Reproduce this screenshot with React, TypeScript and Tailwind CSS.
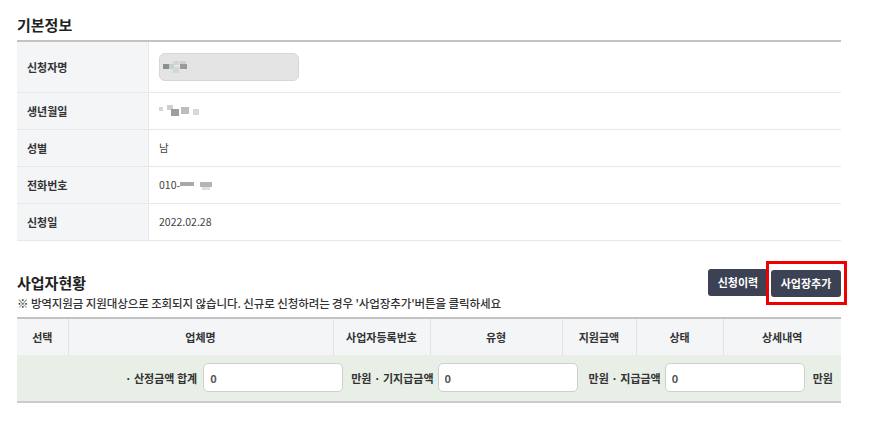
import React from 'react'

const font = { fontFamily: '"Noto Sans CJK KR", "Noto Sans", sans-serif' }

function Blur({ blocks }: { blocks: [number, number, number, number, string][] }) {
  // pixelated redaction marks
  return (
    <span className="relative inline-block h-[12px] w-[40px] align-middle">
      {blocks.map(([x, y, w, h, c], i) => (
        <span
          key={i}
          className="absolute"
          style={{ left: x, top: y, width: w, height: h, background: c }}
        />
      ))}
    </span>
  )
}

const infoRows = [
  { label: '생년월일', value: 'birth' },
  { label: '성별', value: '남' },
  { label: '전화번호', value: 'phone' },
  { label: '신청일', value: '2022.02.28' },
]

const columns = [
  { label: '선택', w: 'w-[51px]' },
  { label: '업체명', w: 'w-[265px]' },
  { label: '사업자등록번호', w: 'w-[97px]' },
  { label: '유형', w: 'w-[132px]' },
  { label: '지원금액', w: 'w-[74px]' },
  { label: '상태', w: 'w-[87px]' },
  { label: '상세내역', w: 'w-[118px]' },
]

function AmountInput() {
  return (
    <input
      readOnly
      value="0"
      className="h-[29px] w-[140px] rounded-[5px] border border-[#cfcfcf] bg-white px-[6px] text-[11px] text-[#555] outline-none"
    />
  )
}

function renderValue(v: string) {
  if (v === 'birth')
    return (
      <Blur
        blocks={[
          [0, 2, 4, 4, '#d6d6d6'],
          [8, 0, 6, 5, '#cfcfcf'],
          [12, 4, 8, 7, '#9e9e9e'],
          [22, 2, 8, 7, '#bdbdbd'],
          [34, 4, 6, 6, '#d9d9d9'],
        ]}
      />
    )
  if (v === 'phone')
    return (
      <span className="inline-flex items-center">
        <span>010-</span>
        <Blur
          blocks={[
            [0, 3, 14, 4, '#a8a8a8'],
            [20, 3, 12, 5, '#b5b5b5'],
            [22, 8, 8, 3, '#e0e0e0'],
          ]}
        />
      </span>
    )
  return v
}

export default function App() {
  return (
    <div className="min-h-screen bg-white text-[#333]" style={font}>
      <div className="w-[824px] ml-[17px] pt-[14px]">
        <h2 className="text-[15px] font-bold leading-[22px] text-[#222]">기본정보</h2>
        <div className="mt-[4px] border-t-2 border-[#c3c3c3]">
          <div className="flex h-[51px] border-b border-[#e8e8e8]">
            <div className="flex w-[132px] items-center border-r border-[#e8e8e8] bg-[#f4f5f7] pl-[10px] text-[11px] font-semibold">
              신청자명
            </div>
            <div className="flex items-center pl-[10px]">
              <div className="flex h-[28px] w-[140px] items-center rounded-[6px] border border-[#d6d6d6] bg-[#e4e4e4] pl-[3px]">
                <Blur
                  blocks={[
                    [0, 3, 6, 5, '#8f8f8f'],
                    [6, 3, 5, 5, '#c7d0d0'],
                    [10, 0, 6, 4, '#d4d4d4'],
                    [10, 6, 6, 6, '#d2d8da'],
                    [17, 0, 6, 4, '#cfcfcf'],
                    [17, 3, 7, 5, '#9a9a9a'],
                  ]}
                />
              </div>
            </div>
          </div>
          {infoRows.map((r) => (
            <div key={r.label} className="flex h-[37px] border-b border-[#e8e8e8]">
              <div className="flex w-[132px] items-center border-r border-[#e8e8e8] bg-[#f4f5f7] pl-[10px] text-[11px] font-semibold">
                {r.label}
              </div>
              <div className="flex items-center pl-[10px] text-[10.5px] text-[#444]">
                {renderValue(r.value)}
              </div>
            </div>
          ))}
        </div>

        <div className="mt-[28px] flex items-end justify-between">
          <div>
            <h2 className="text-[15px] font-bold leading-[22px] text-[#222]">사업자현황</h2>
            <p className="mt-[1px] text-[11.5px] font-medium leading-[16px] tracking-[-0.1px] text-[#333]">
              ※ 방역지원금 지원대상으로 조회되지 않습니다. 신규로 신청하려는 경우 '사업장추가'버튼을 클릭하세요
            </p>
          </div>
          <div className="mb-[14px] flex gap-[3px]">
            <button className="h-[27px] w-[60px] rounded-[3px] bg-[#3c4154] text-[11px] font-semibold text-white">
              신청이력
            </button>
            <div className="relative">
              <button className="h-[27px] w-[70px] rounded-[3px] bg-[#3c4154] text-[11px] font-semibold text-white">
                사업장추가
              </button>
              <div className="pointer-events-none absolute -left-[5px] -right-[6px] -top-[8px] -bottom-[8px] border-[3px] border-[#ee0000]" />
            </div>
          </div>
        </div>

        <table className="mt-[6px] w-full border-collapse border-t-2 border-[#c3c3c3] text-[11px]">
          <thead>
            <tr className="h-[37px] bg-[#f4f5f7]">
              {columns.map((c, i) => (
                <th
                  key={c.label}
                  className={`${c.w} font-semibold text-[#333] ${i < columns.length - 1 ? 'border-r border-[#e3e3e3]' : ''}`}
                >
                  {c.label}
                </th>
              ))}
            </tr>
          </thead>
          <tbody>
            <tr className="h-[47px] border-b-2 border-[#c9cdc9] bg-[#e8efe6]">
              <td colSpan={7} className="pr-[8px]">
                <div className="flex items-center justify-end font-semibold text-[#333]">
                  <span className="mr-[6px]">· 산정금액 합계</span>
                  <AmountInput />
                  <span className="ml-[8px] mr-[4px]">만원 · 기지급금액</span>
                  <AmountInput />
                  <span className="ml-[11px] mr-[4px]">만원 · 지급금액</span>
                  <AmountInput />
                  <span className="ml-[8px]">만원</span>
                </div>
              </td>
            </tr>
          </tbody>
        </table>
      </div>
    </div>
  )
}
